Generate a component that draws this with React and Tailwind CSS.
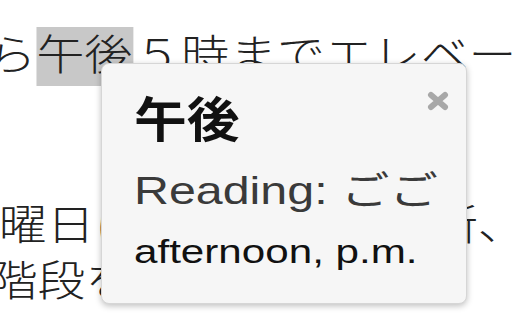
export default function App() {
  const jp = { fontFamily: '"Noto Sans CJK JP", "Noto Sans", sans-serif' };
  const lat = { fontFamily: '"Liberation Sans", Arial, "Noto Sans CJK JP", sans-serif' };
  return (
    <div className="relative w-[512px] h-[320px] overflow-hidden bg-white" style={jp}>
      <div className="origin-top-left scale-x-[1.14] pt-[22px] text-[42px] text-[#222] whitespace-nowrap font-light">
        <div className="h-[59px] leading-[59px] ml-[-52px]">
          から<span className="inline-block bg-[#c8c8c8] leading-[50px] pb-[9px] pr-[1px]">午後</span>５時までエレベーター
        </div>
        <div className="h-[113px]" />
        <div className="h-[56px] leading-[56px] ml-[-43px]">
          月曜日は本館管理事務所、
        </div>
        <div className="h-[56px] leading-[56px] ml-[-9px]">
          階段をご利用下さい
        </div>
      </div>

      <div className="absolute left-[101px] top-[63px] w-[366px] h-[241px] rounded-[8px] border border-[#d6d6d6] bg-[#f6f6f6] shadow-[0_2px_6px_rgba(0,0,0,0.25)] pl-[32px] pt-[22px]">
        <div className="flex items-start justify-between pr-[16px]">
          <div className="origin-left scale-x-[1.1] text-[48px] leading-[60px] font-bold text-[#111]">午後</div>
          <svg width="24" height="20" viewBox="0 0 24 20" className="mt-[5px]">
            <path d="M5 4 L19 16 M19 4 L5 16" stroke="#a8a8a8" strokeWidth="6" strokeLinecap="round" />
          </svg>
        </div>
        <div className="mt-[20px] origin-left scale-x-[1.24] text-[39px] leading-[50px] text-[#3a3a3a] whitespace-nowrap" style={lat}>
          Reading: ごご
        </div>
        <div className="mt-[15px] origin-left scale-x-[1.24] text-[34px] leading-[40px] text-[#111] whitespace-nowrap" style={lat}>
          afternoon, p.m.
        </div>
      </div>
    </div>
  );
}
